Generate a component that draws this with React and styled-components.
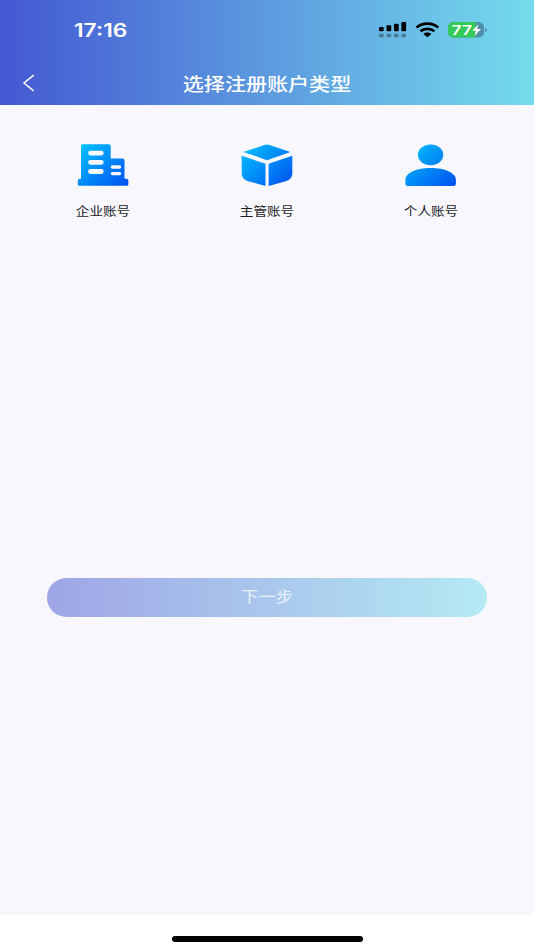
import React from "react";
import styled, { createGlobalStyle } from "styled-components";

const GlobalStyle = createGlobalStyle`
  * { box-sizing: border-box; }
  body {
    margin: 0;
    background: #fff;
    font-family: "Noto Sans CJK SC", "Noto Sans", sans-serif;
  }
`;

const Screen = styled.div`
  display: flex;
  flex-direction: column;
  width: 534px;
  height: 950px;
  overflow: hidden;
  background: #fff;
`;

const Header = styled.header`
  flex: none;
  height: 105px;
  background: linear-gradient(90deg, #4458d2 0%, #74dcec 100%);
`;

const StatusBar = styled.div`
  display: flex;
  align-items: center;
  justify-content: space-between;
  height: 60px;
  padding: 0 46px 0 74px;
`;

const Time = styled.span`
  margin-top: 2px;
  font: 600 18px/24px Inter, sans-serif;
  color: #fff;
  transform: scaleX(1.26);
  transform-origin: left center;
`;

const StatusIcons = styled.svg`
  display: block;
  width: 110px;
  height: 20px;
`;

const BatteryText = styled.text`
  font: 600 12.5px Inter, sans-serif;
  fill: #fff;
`;

const NavBar = styled.div`
  display: grid;
  grid-template-columns: 60px 1fr 60px;
  align-items: center;
  height: 45px;
`;

const BackButton = styled.button`
  display: flex;
  padding: 0 0 0 22px;
  border: 0;
  background: none;
`;

const Title = styled.h1`
  margin: 0;
  font-size: 18px;
  font-weight: 500;
  line-height: 26px;
  text-align: center;
  color: #fff;
  transform: scaleX(1.17);
`;

const Content = styled.main`
  display: flex;
  flex-direction: column;
  flex: none;
  height: 810px;
  padding: 38px 21px 0;
  background: #f7f7fd;
`;

const TypeList = styled.div`
  display: grid;
  grid-template-columns: repeat(3, 1fr);
  height: 435px;
`;

const TypeOption = styled.div`
  display: flex;
  flex-direction: column;
  align-items: center;
`;

const TypeIcon = styled.svg`
  display: block;
  width: 54px;
  height: 44px;
`;

const TypeLabel = styled.span`
  margin-top: 15px;
  font-size: 12px;
  line-height: 18px;
  color: #1b1b1e;
  transform: scaleX(1.135);
`;

const NextButton = styled.button`
  height: 39px;
  margin: 0 26px 0;
  padding: 0 0 3px;
  border: 0;
  border-radius: 20px / 19px;
  background: linear-gradient(90deg, #9fa5e6 0%, #b4eaf3 100%);
  color: rgba(255, 255, 255, 0.8);
  font: 400 15px/24px "Noto Sans CJK SC", sans-serif;
`;

const ButtonLabel = styled.span`
  display: block;
  transform: scaleX(1.16);
`;

const HomeArea = styled.footer`
  display: flex;
  justify-content: center;
  height: 35px;
  padding-top: 21px;
`;

const HomeIndicator = styled.div`
  width: 191px;
  height: 6px;
  border-radius: 3px;
  background: #000;
`;

function IconGradient({ id }) {
  return (
    <defs>
      <linearGradient id={id} gradientUnits="userSpaceOnUse" x1="6" y1="0" x2="48" y2="46">
        <stop offset="0" stopColor="#00c3ff" />
        <stop offset="1" stopColor="#0050f0" />
      </linearGradient>
    </defs>
  );
}

function CompanyIcon() {
  return (
    <TypeIcon viewBox="0 0 54 44">
      <IconGradient id="company" />
      <path
        fill="url(#company)"
        d="M6.8 1.3H32.5Q34.7 1.3 34.7 3.3V15.6H46.4Q48.5 15.6 48.5 17.6V35.8H50.2Q52.4 35.8 52.4 38V41.2Q52.4 42.8 50.7 42.8H3.5Q1.8 42.8 1.8 41.2V38Q1.8 35.8 4 35.8H5V3.3Q5 1.3 6.8 1.3Z"
      />
      <g stroke="#f7f7fd" strokeLinecap="round">
        <path strokeWidth="4.8" d="M14.5 10.1H25.3M14.5 19.3H25.3M14.5 28.5H25.3" />
        <path strokeWidth="3.4" d="M36.4 24H43.6M36.4 30.6H43.6" />
      </g>
    </TypeIcon>
  );
}

function SupervisorIcon() {
  return (
    <TypeIcon viewBox="0 0 54 44">
      <IconGradient id="supervisor" />
      <g fill="url(#supervisor)">
        <path d="M25.4 1.7Q27 1.2 28.6 1.7L50.5 8.9L27 17.2L3.5 8.9Z" />
        <path d="M1.7 12.7L25.5 20.8V43L8.2 38.2Q1.7 36 1.7 30.7Z" />
        <path d="M52.3 12.7L28.6 20.8V43L45.8 38.2Q52.3 36 52.3 30.7Z" />
      </g>
    </TypeIcon>
  );
}

function PersonalIcon() {
  return (
    <TypeIcon viewBox="0 0 54 44">
      <IconGradient id="personal" />
      <g fill="url(#personal)">
        <ellipse cx="26.6" cy="11.8" rx="12.7" ry="10.4" />
        <path d="M1.4 41.1V37C1.4 29.5 12.7 25 26.6 25S51.9 29.5 51.9 37V41.1Q51.9 42.9 50 42.9H3.3Q1.4 42.9 1.4 41.1Z" />
      </g>
    </TypeIcon>
  );
}

function StatusGlyphs() {
  return (
    <StatusIcons viewBox="378 20 110 20">
      <g>
        <rect x="379" y="27" width="4.7" height="4.2" rx="1" />
        <rect x="386.5" y="25.3" width="4.7" height="5.9" rx="1" />
        <rect x="394" y="23.8" width="4.7" height="7.4" rx="1" />
        <rect x="401.4" y="22" width="4.7" height="9.2" rx="1" />
      </g>
      <g opacity="0.34">
        <rect x="379" y="33.8" width="4.7" height="3.5" rx="1" />
        <rect x="386.5" y="33.8" width="4.7" height="3.5" rx="1" />
        <rect x="394" y="33.8" width="4.7" height="3.5" rx="1" />
        <rect x="401.4" y="33.8" width="4.7" height="3.5" rx="1" />
      </g>
      <g fill="none" stroke="#000" strokeWidth="2.7">
        <path d="M416.5 27.6C422.5 22.2 432.3 22.2 438.3 27.6" />
        <path d="M420.4 31.3C424.2 28 430.6 28 434.4 31.3" />
      </g>
      <path d="M423.4 33.9C425.5 32 429.3 32 431.4 33.9L427.4 37.2Z" />
      <clipPath id="battery-body">
        <rect x="448" y="22" width="36" height="15.6" rx="5.3" />
      </clipPath>
      <g clipPath="url(#battery-body)">
        <rect x="448" y="22" width="36" height="16" fill="#508fa9" />
        <rect x="448" y="22" width="27.5" height="16" fill="#34c959" />
      </g>
      <path d="M485.2 27.4Q487 28 487 29.8T485.2 32.3Z" fill="#508fa9" />
      <BatteryText x="451.5" y="34.5" textLength="20.5" lengthAdjust="spacingAndGlyphs">
        77
      </BatteryText>
      <path fill="#fff" d="M478.4 24.3L472.2 30.7H475.9L474.6 35.7L481 29.1H477.2Z" />
    </StatusIcons>
  );
}

const accountTypes = [
  { label: "企业账号", Icon: CompanyIcon },
  { label: "主管账号", Icon: SupervisorIcon },
  { label: "个人账号", Icon: PersonalIcon },
];

export default function App() {
  return (
    <>
      <GlobalStyle />
      <Screen>
        <Header>
          <StatusBar>
            <Time>17:16</Time>
            <StatusGlyphs />
          </StatusBar>
          <NavBar>
            <BackButton aria-label="返回">
              <svg width="14" height="18" viewBox="0 0 14 18">
                <path d="M11.7 1.2L2 9L11.7 16.8" fill="none" stroke="#fff" strokeWidth="1.5" />
              </svg>
            </BackButton>
            <Title>选择注册账户类型</Title>
          </NavBar>
        </Header>
        <Content>
          <TypeList>
            {accountTypes.map(({ label, Icon }) => (
              <TypeOption key={label}>
                <Icon />
                <TypeLabel>{label}</TypeLabel>
              </TypeOption>
            ))}
          </TypeList>
          <NextButton>
            <ButtonLabel>下一步</ButtonLabel>
          </NextButton>
        </Content>
        <HomeArea>
          <HomeIndicator />
        </HomeArea>
      </Screen>
    </>
  );
}
